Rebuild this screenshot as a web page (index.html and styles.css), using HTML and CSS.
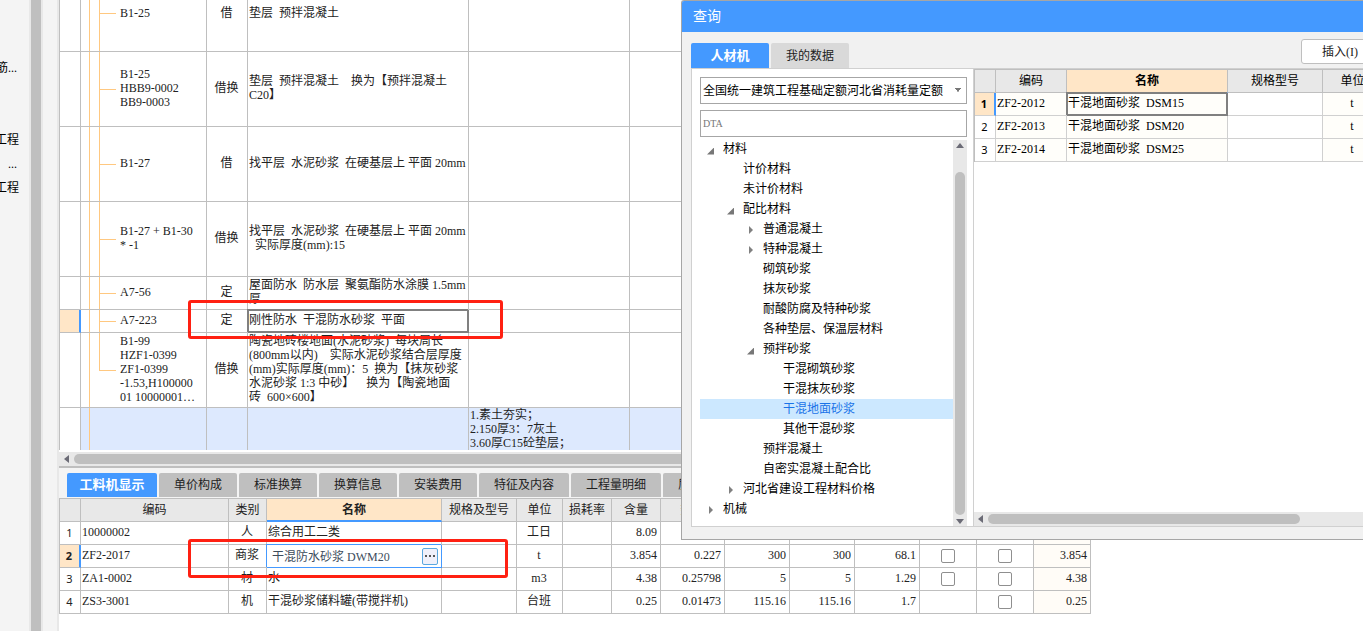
FILE: index.html
```html
<!DOCTYPE html>
<html lang="zh-CN">
<head>
<meta charset="utf-8">
<title>查询</title>
<link rel="stylesheet" href="styles.css">
</head>
<body>
<div class="app">
  <aside class="side">
    <span class="side-item side-first">筋...</span>
    <span class="side-item">工程</span>
    <span class="side-item side-dots">...</span>
    <span class="side-item">工程</span>
  </aside>
  <div class="splitter"></div>
  <main class="main">
    <table class="grid items">
      <colgroup><col class="w21"><col class="w126"><col class="w41"><col class="w221"><col class="w161"><col></colgroup>
      <tbody>
        <tr class="r-first"><td></td><td class="tree-cell">B1-25</td><td class="c">借</td><td>垫层&ensp;预拌混凝土</td><td></td><td></td></tr>
        <tr class="r-tall"><td></td><td class="tree-cell">B1-25<br>HBB9-0002<br>BB9-0003</td><td class="c">借换</td><td>垫层&ensp;预拌混凝土&emsp;换为【预拌混凝土<br>C20】</td><td></td><td></td></tr>
        <tr class="r-tall"><td></td><td class="tree-cell">B1-27</td><td class="c">借</td><td>找平层&ensp;水泥砂浆&ensp;在硬基层上&nbsp;平面 20mm</td><td></td><td></td></tr>
        <tr class="r-tall"><td></td><td class="tree-cell">B1-27 + B1-30<br>* -1</td><td class="c">借换</td><td>找平层&ensp;水泥砂浆&ensp;在硬基层上&nbsp;平面 20mm<br>&ensp;实际厚度(mm):15</td><td></td><td></td></tr>
        <tr class="r-two"><td></td><td class="tree-cell">A7-56</td><td class="c">定</td><td>屋面防水&ensp;防水层&ensp;聚氨酯防水涂膜 1.5mm<br>厚</td><td></td><td></td></tr>
        <tr class="r-one"><td class="mark"></td><td class="tree-cell">A7-223</td><td class="c">定</td><td class="selected">刚性防水&ensp;干混防水砂浆&ensp;平面</td><td></td><td></td></tr>
        <tr class="r-tall"><td></td><td class="tree-cell tree-last">B1-99<br>HZF1-0399<br>ZF1-0399<br>-1.53,H100000<br>01 10000001…</td><td class="c">借换</td><td>陶瓷地砖楼地面(水泥砂浆)&ensp;每块周长<br>(800mm以内)&emsp;实际水泥砂浆结合层厚度<br>(mm)实际厚度(mm)：5&ensp;换为【抹灰砂浆<br>水泥砂浆 1:3 中砂】&emsp;换为【陶瓷地面<br>砖&ensp;600×600】</td><td></td><td></td></tr>
        <tr class="r-cut"><td></td><td class="tree-cell tree-root"></td><td></td><td></td><td>1.素土夯实；<br>2.150厚3：7灰土<br>3.60厚C15砼垫层；</td><td></td></tr>
      </tbody>
    </table>
    <div class="hbar hbar-main"><i class="tri left"></i><i class="thumb"></i></div>
    <nav class="tabs">
      <button class="tab active">工料机显示</button>
      <button class="tab">单价构成</button>
      <button class="tab">标准换算</button>
      <button class="tab">换算信息</button>
      <button class="tab">安装费用</button>
      <button class="tab">特征及内容</button>
      <button class="tab">工程量明细</button>
      <button class="tab">质量</button>
    </nav>
    <div class="detail-pane">
      <table class="grid detail">
        <colgroup><col class="w21"><col class="w148"><col class="w38"><col class="w175"><col class="w75"><col class="w46"><col class="w49"><col class="w49"><col class="w64"><col class="w65"><col class="w65"><col class="w65"><col class="w57"><col class="w57"><col class="w57"></colgroup>
        <thead>
          <tr><th></th><th>编码</th><th>类别</th><th class="current">名称</th><th>规格及型号</th><th>单位</th><th>损耗率</th><th>含量</th><th>数量</th><th></th><th></th><th></th><th></th><th></th><th></th></tr>
        </thead>
        <tbody>
          <tr><td class="num">1</td><td>10000002</td><td class="c">人</td><td>综合用工二类</td><td></td><td class="c">工日</td><td></td><td class="r">8.09</td><td></td><td></td><td></td><td></td><td></td><td></td><td class="r tint"></td></tr>
          <tr><td class="num mark">2</td><td>ZF2-2017</td><td class="c">商浆</td><td class="editing"><div class="editor"><input class="edit-box" type="text" aria-label="名称" value="干混防水砂浆 DWM20"><button class="more" aria-label="更多"><i></i><i></i><i></i></button></div></td><td></td><td class="c">t</td><td></td><td class="r">3.854</td><td class="r">0.227</td><td class="r">300</td><td class="r">300</td><td class="r">68.1</td><td class="c"><input class="check" type="checkbox" aria-label="选项一"></td><td class="c"><input class="check" type="checkbox" aria-label="选项二"></td><td class="r tint">3.854</td></tr>
          <tr><td class="num">3</td><td>ZA1-0002</td><td class="c">材</td><td>水</td><td></td><td class="c">m3</td><td></td><td class="r">4.38</td><td class="r">0.25798</td><td class="r">5</td><td class="r">5</td><td class="r">1.29</td><td class="c"><input class="check" type="checkbox" aria-label="选项一"></td><td class="c"><input class="check" type="checkbox" aria-label="选项二"></td><td class="r tint">4.38</td></tr>
          <tr><td class="num">4</td><td>ZS3-3001</td><td class="c">机</td><td>干混砂浆储料罐(带搅拌机)</td><td></td><td class="c">台班</td><td></td><td class="r">0.25</td><td class="r">0.01473</td><td class="r">115.16</td><td class="r">115.16</td><td class="r">1.7</td><td></td><td class="c"><input class="check" type="checkbox" aria-label="选项二"></td><td class="r tint">0.25</td></tr>
        </tbody>
      </table>
    </div>
  </main>
  <div class="callout callout-top"></div>
  <div class="callout callout-bottom"></div>

  <section class="dialog" role="dialog" aria-labelledby="dlg-title">
    <h1 class="dlg-title" id="dlg-title">查询</h1>
    <div class="dlg-bar">
      <button class="dtab active">人材机</button>
      <button class="dtab">我的数据</button>
      <button class="insert">插入(I)</button>
    </div>
    <div class="dlg-body">
      <div class="finder">
        <select class="field" aria-label="定额库"><option>全国统一建筑工程基础定额河北省消耗量定额</option></select>
        <input class="field search" type="text" aria-label="搜索" placeholder="DTA">
        <div class="tree-wrap">
          <ul class="tree">
            <li class="l0"><i class="open"></i>材料</li>
            <li class="l1"><i></i>计价材料</li>
            <li class="l1"><i></i>未计价材料</li>
            <li class="l1"><i class="open"></i>配比材料</li>
            <li class="l2"><i class="shut"></i>普通混凝土</li>
            <li class="l2"><i class="shut"></i>特种混凝土</li>
            <li class="l2"><i></i>砌筑砂浆</li>
            <li class="l2"><i></i>抹灰砂浆</li>
            <li class="l2"><i></i>耐酸防腐及特种砂浆</li>
            <li class="l2"><i></i>各种垫层、保温层材料</li>
            <li class="l2"><i class="open"></i>预拌砂浆</li>
            <li class="l3"><i></i>干混砌筑砂浆</li>
            <li class="l3"><i></i>干混抹灰砂浆</li>
            <li class="l3 picked"><i></i>干混地面砂浆</li>
            <li class="l3"><i></i>其他干混砂浆</li>
            <li class="l2"><i></i>预拌混凝土</li>
            <li class="l2"><i></i>自密实混凝土配合比</li>
            <li class="l1"><i class="shut"></i>河北省建设工程材料价格</li>
            <li class="l0"><i class="shut"></i>机械</li>
          </ul>
          <div class="vbar"><i class="tri up"></i><i class="vthumb"></i><i class="tri down"></i></div>
        </div>
      </div>
      <div class="results">
        <table class="grid found">
          <colgroup><col class="w21"><col class="w71"><col class="w161"><col class="w95"><col class="w60"></colgroup>
          <thead><tr><th></th><th>编码</th><th class="current">名称</th><th>规格型号</th><th>单位</th></tr></thead>
          <tbody>
            <tr><td class="num mark">1</td><td>ZF2-2012</td><td class="selected">干混地面砂浆&ensp;DSM15</td><td class="plain"></td><td class="c">t</td></tr>
            <tr><td class="num">2</td><td>ZF2-2013</td><td>干混地面砂浆&ensp;DSM20</td><td class="plain"></td><td class="c">t</td></tr>
            <tr><td class="num">3</td><td>ZF2-2014</td><td>干混地面砂浆&ensp;DSM25</td><td class="plain"></td><td class="c">t</td></tr>
          </tbody>
        </table>
        <div class="hbar hbar-dlg"><i class="tri left"></i><i class="thumb"></i></div>
      </div>
    </div>
  </section>
</div>
</body>
</html>
```
FILE: styles.css
```css
* { box-sizing: border-box; }

body {
  margin: 0;
  background: #fff;
  color: #222;
  font: 12px/14px "Liberation Serif", "Noto Sans CJK SC", sans-serif;
}

button, input, select { font: inherit; color: inherit; margin: 0; }

.app {
  position: relative;
  display: flex;
  min-height: 100vh;
  overflow: hidden;
}

/* Left strip */
.side {
  display: flex;
  flex-direction: column;
  flex: none;
  width: 29px;
  padding: 56px 10px 0 0;
  background: #f4f4f4;
  color: #000;
  overflow: hidden;
}
.side-item { display: flex; justify-content: flex-end; height: 24px; line-height: 24px; white-space: nowrap; }
.side-first { margin-bottom: 48px; padding-right: 2px; }
.side-dots { padding-right: 2px; }

.splitter {
  flex: none;
  width: 14px;
  background: #bfbfbf;
  border: solid #e8e8e8;
  border-width: 0 2px;
}

.main {
  flex: 1;
  min-width: 0;
  display: flex;
  flex-direction: column;
  margin-left: 14px;
  border-left: 2px solid #e8e8e8;
  background: #f4f4f4;
  box-shadow: -14px 0 #f4f4f4;
}

/* Grids */
.grid {
  table-layout: fixed;
  border-collapse: separate;
  border-spacing: 0;
  border-left: 1px solid #bfbfbf;
  background: #fff;
}
.grid td, .grid th {
  border: solid #bfbfbf;
  border-width: 0 1px 1px 0;
  padding: 0 2px;
  white-space: nowrap;
  overflow: hidden;
  font-weight: 400;
}
.grid td { padding: 0 2px 2px 1px; }
.grid th { height: 23px; background: #e8e8e8; text-align: center; }
.grid th.current { background: #ffe6c7; border-bottom: 2px solid #4499ff; font-weight: 700; }
.grid .c { text-align: center; }
.grid .r { text-align: right; }
.grid .num { padding-bottom: 0; text-align: center; font-family: "Noto Sans", sans-serif; font-size: 11px; }
.grid .mark { background: #ffe6c7; border-right: 2px solid #4499ff; font-weight: 700; }
.grid .tint { background: #fffcf7; }
.grid td.selected {
  border-right: 2px solid #808080;
  border-bottom: 2px solid #808080;
  box-shadow: -1px -1px #808080, inset 1px 1px #808080;
}

.w21 { width: 21px; } .w38 { width: 38px; } .w41 { width: 41px; }
.w46 { width: 46px; } .w49 { width: 49px; } .w57 { width: 57px; }
.w60 { width: 60px; } .w64 { width: 64px; } .w65 { width: 65px; }
.w71 { width: 71px; } .w75 { width: 75px; } .w95 { width: 95px; }
.w126 { width: 126px; } .w148 { width: 148px; } .w161 { width: 161px; }
.w175 { width: 175px; } .w221 { width: 221px; }

.items { width: 100%; }
.grid .r-first td { height: 52px; padding-bottom: 26px; }
.r-tall td { height: 75px; }
.r-two td { height: 33px; }
.r-one td { height: 23px; }
.grid .r-cut td { height: 42px; padding-bottom: 0; background-color: #dde9fe; border-bottom: 0; }
.grid .r-cut td:first-child { background: #fff; }

/* Branch lines of the item tree */
.grid .tree-cell {
  padding-left: 39px;
  background-image:
    linear-gradient(#ffc880, #ffc880),
    linear-gradient(#ffc880, #ffc880),
    linear-gradient(#ffc880, #ffc880);
  background-repeat: no-repeat;
  background-size: 1px 100%, 1px 100%, 17px 1px;
  background-position: 8px 0, 18px 0, 18px 50%;
}
.grid .r-first .tree-cell { background-position: 8px 0, 18px 0, 18px 13px; }
.grid .tree-last { background-size: 1px 100%, 1px 50%, 17px 1px; }
.grid .tree-root { background-size: 1px 100%, 0 0, 0 0; }

/* Scroll bars */
.hbar { display: flex; align-items: center; gap: 5px; height: 14px; background: #e8e8e8; }
.thumb { height: 10px; border-radius: 5px; background: #bfbfbf; }
.hbar-main { height: 18px; padding-left: 5px; border-top: 2px solid #fff; border-bottom: 2px solid #bfbfbf; }
.hbar-main .thumb { flex: 1; }
.hbar-dlg { padding-left: 4px; margin-top: auto; }
.hbar-dlg .thumb { width: 312px; }
.tri { width: 0; height: 0; border: solid transparent; }
.tri.left { border-width: 4px 5px 4px 0; border-right-color: #6b6b76; }
.tri.up { border-width: 0 4px 5px; border-bottom-color: #6b6b76; }
.tri.down { border-width: 5px 4px 0; border-top-color: #6b6b76; }

/* Lower tabs */
.tabs { display: flex; gap: 2px; padding: 5px 0 1px 8px; overflow: hidden; }
.tab {
  flex: none;
  height: 24px;
  padding: 0 15px;
  border: 0;
  border-radius: 2px 2px 0 0;
  background: #bfbfbf;
}
.tab.active { padding: 0 12px; min-width: 90px; background: #4499ff; color: #fff; font-size: 13px; font-weight: 700; }

.detail-pane { flex: 1; background: #fff; }
.detail { width: 1032px; border-top: 1px solid #bfbfbf; }
.detail td { height: 23px; }
.grid.detail .r { padding-right: 3px; }

.grid td.editing { padding: 0; border-color: #4499ff; box-shadow: -1px -1px #4499ff; }
.editor { display: flex; align-items: center; padding: 0 3px 0 5px; }
.edit-box { flex: 1; min-width: 0; height: 18px; padding: 0; border: 0; outline: 0; background: none; color: #3d4c5c; }
.more {
  display: flex;
  align-items: center;
  justify-content: center;
  gap: 2px;
  width: 16px;
  height: 17px;
  padding: 0;
  border: 1px solid #5aa7e0;
  border-radius: 2px;
  background: #f0f0fa;
}
.more i { width: 2px; height: 2px; background: #555; }

.check {
  appearance: none;
  display: block;
  width: 14px;
  height: 14px;
  margin: 1px auto 0;
  border: 1px solid #8f8f8f;
  border-radius: 2px;
  background: #fff;
}

/* Red marks over the grids */
.callout { position: absolute; border: 3px solid #ff2012; border-radius: 3px; }
.callout-top { left: 188px; top: 300px; width: 315px; height: 39px; }
.callout-bottom { left: 188px; top: 539px; width: 320px; height: 39px; }

/* Query window */
.dialog {
  position: absolute;
  left: 681px;
  right: 0;
  top: 0;
  display: flex;
  flex-direction: column;
  padding-bottom: 12px;
  border: solid #a6a6a6;
  border-width: 1px 0 1px 1px;
  border-radius: 3px 0 0 0;
  background: #f1f1f1;
  overflow: hidden;
}
.dlg-title {
  margin: 0;
  padding-left: 11px;
  background: #4499ff;
  color: #fff;
  font-size: 14px;
  font-weight: 400;
  line-height: 31px;
}
.dlg-bar { display: flex; align-items: flex-end; gap: 2px; height: 36px; padding-left: 9px; }
.dtab { flex: none; width: 78px; height: 25px; padding: 0; border: 0; border-radius: 2px 2px 0 0; background: #d9d9d9; }
.dtab.active { background: #4499ff; color: #fff; font-size: 13px; font-weight: 700; }
.insert {
  flex: none;
  width: 78px;
  height: 25px;
  margin: 0 -16px 4px auto;
  padding: 0;
  border: 1px solid #bfbfbf;
  border-radius: 3px;
  background: #fff;
}
.dlg-body {
  display: flex;
  margin-left: 9px;
  border: solid #d0d0d0;
  border-width: 1px 0 1px 1px;
  background: #fff;
}
.finder { flex: none; display: flex; flex-direction: column; width: 282px; padding: 8px 6px 0 8px; border-right: 1px solid #d0d0d0; color: #000; }
.field {
  width: 267px;
  height: 27px;
  padding: 0 2px;
  border: 1px solid #a6a6a6;
  border-radius: 0;
  background: #fff;
}
select.field {
  appearance: none;
  background-image:
    linear-gradient(to top right, transparent 45%, #777 50%),
    linear-gradient(to top left, transparent 45%, #777 50%);
  background-size: 3px 4px;
  background-position: right 8px top 10px, right 5px top 10px;
  background-repeat: no-repeat;
}
.search { margin-top: 6px; font-size: 10px; }
.search::placeholder { color: #777; opacity: 1; }
.tree-wrap { display: flex; margin-top: 2px; }
.tree { flex: 1; margin: 0; padding: 0 0 7px; list-style: none; }
.tree li { display: flex; align-items: center; height: 20px; white-space: nowrap; }
.tree i { flex: none; width: 7px; height: 8px; margin-right: 9px; }
.tree i.open { height: 7px; margin-top: 4px; background: #777; clip-path: polygon(100% 0, 100% 100%, 0 100%); }
.tree i.shut { width: 4px; margin: 2px 10px 0 2px; background: #808080; clip-path: polygon(0 0, 100% 50%, 0 100%); }
.l0 { padding-left: 7px; }
.l1 { padding-left: 27px; }
.l2 { padding-left: 47px; }
.l3 { padding-left: 67px; }
.tree .picked { background: #cce8ff; color: #1a73e8; }
.vbar { display: flex; flex-direction: column; align-items: center; width: 14px; margin-top: 1px; padding: 3px 0 2px; background: #e8e8e8; }
.vthumb { flex: 1; width: 10px; margin: 24px 0 4px; border-radius: 5px; background: #bfbfbf; }

.results { flex: 1; min-width: 0; display: flex; flex-direction: column; overflow: hidden; }
.found { width: 409px; flex: none; color: #000; }
.found td { height: 23px; background: #fffefa; border-color: #d0d0d0; }
.found th { height: 24px; border-top: 1px solid #bfbfbf; }
.grid.found th.current { border-bottom-width: 1px; }
.found td.num, .found td.plain { background: #fff; }
.found td.mark { background: #ffe6c7; border-right-color: #4499ff; }
```
